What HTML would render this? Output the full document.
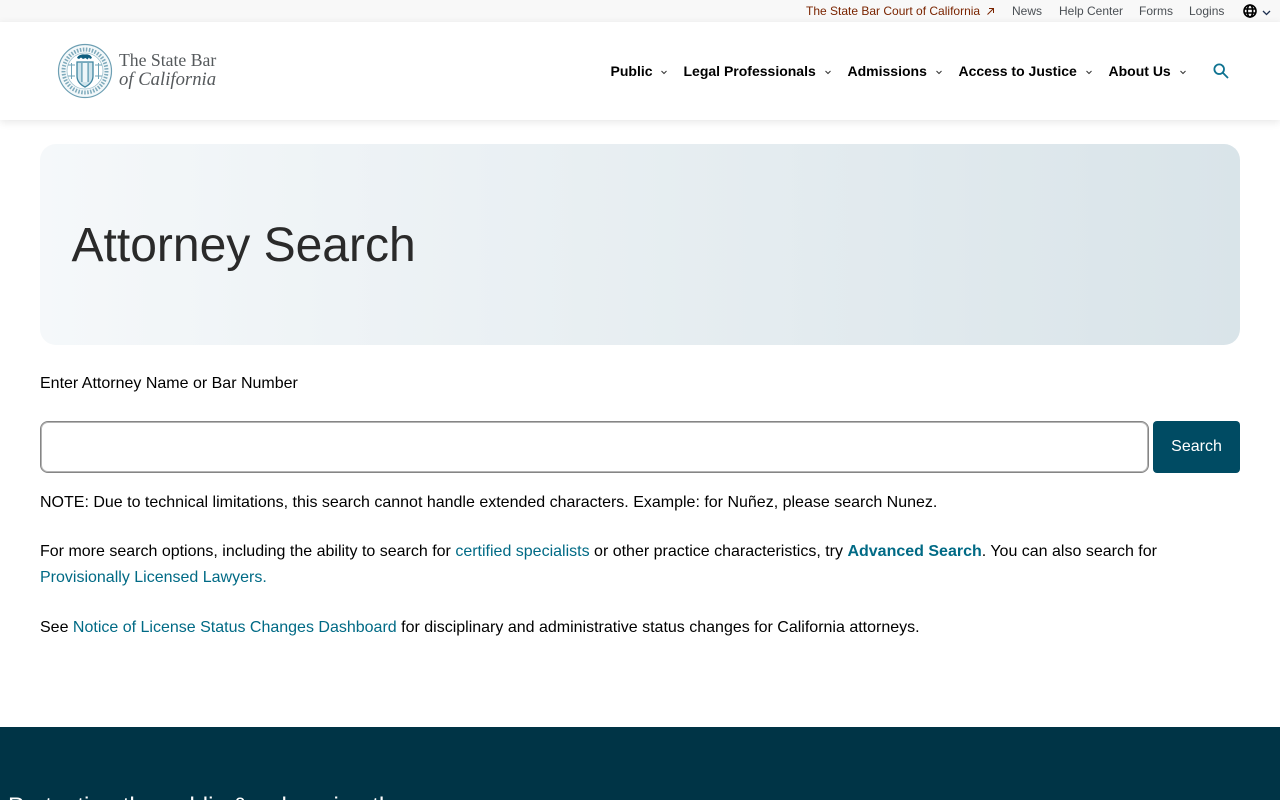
<!DOCTYPE html>
<html lang="en">
<head>
<meta charset="utf-8">
<title>Attorney Search</title>
<style>
*{box-sizing:border-box}
html,body{margin:0;padding:0;width:1280px;height:800px;overflow:hidden;background:#fff;font-family:"Liberation Sans",Arial,sans-serif;color:#000}
a{text-decoration:none}
.abs{position:absolute;white-space:nowrap}
#top{position:absolute;left:0;top:0;width:1280px;height:22px;background:#f8f8f8}
#top .abs{font-size:12px;line-height:22px;top:0;color:#4a4f54}
#hdr{position:absolute;left:0;top:22px;width:1280px;height:98px;background:#fff;box-shadow:0 2px 8px rgba(0,0,0,.1)}
.nav{position:absolute;top:62px;font-size:14px;font-weight:700;line-height:18px;color:#000;white-space:nowrap;margin-left:-.5px}
.chev{position:absolute;top:70px}
#hero{position:absolute;left:40px;top:144px;width:1200px;height:201px;border-radius:16px;background:linear-gradient(90deg,#f5f8fa 0%,#d9e4e9 100%)}
#hero h1{position:absolute;left:32px;top:72px;margin:0;font-size:48px;line-height:60px;font-weight:400;color:#2a2a2a;white-space:nowrap;margin-left:-.5px}
.t{position:absolute;left:40px;font-size:16px;line-height:26px;color:#000;white-space:nowrap}
.t a{color:#006a85}
#inp{position:absolute;left:40px;top:421px;width:1109px;height:52px;border:1px solid #858585;border-radius:8px;background:#fff;box-shadow:inset 0 0 0 1px #b5b5b5}
#btn{position:absolute;left:1153px;top:421px;width:87px;height:52px;background:#004b63;border-radius:4px;color:#fff;font-size:16px;line-height:52px;text-align:center}
#foot{position:absolute;left:0;top:727px;width:1280px;height:73px;background:#003446;overflow:hidden}
#foot div{position:absolute;left:8px;top:65px;font-size:24px;line-height:30px;color:#fff;white-space:nowrap}
</style>
</head>
<body>
<div id="top">
  <a class="abs" style="left:806px;color:#7a2400">The State Bar Court of California</a>
  <svg class="abs" style="left:986px;top:7px" width="9" height="9" viewBox="0 0 9 9" fill="none" stroke="#7a2400" stroke-width="1"><path d="M1.500 7.500L7 2M3 1.500H7.500V6"/></svg>
  <a class="abs" style="left:1012px">News</a>
  <a class="abs" style="left:1059px">Help Center</a>
  <a class="abs" style="left:1139px">Forms</a>
  <a class="abs" style="left:1189px">Logins</a>
  <svg class="abs" style="left:1243px;top:4px" width="14" height="14" viewBox="0 0 14 14" fill="none" stroke="#000" stroke-width="1.600"><circle cx="7" cy="7" r="6"/><ellipse cx="7" cy="7" rx="2.700" ry="6"/><path d="M1 5H13M1 9H13"/></svg>
  <svg class="abs" style="left:1262px;top:10px" width="9" height="6" viewBox="0 0 9 6" fill="none" stroke="#1d2f50" stroke-width="1.300"><path d="M1 1L4.500 4.500L8 1"/></svg>
</div>
<div id="hdr"></div>

<svg class="abs" style="left:57px;top:42.500px" width="56" height="56" viewBox="0 0 56 56" fill="none">
  <circle cx="28" cy="28" r="26.500" fill="#f3f8fa" stroke="#6d9fb3" stroke-width="1.200"/>
  <circle cx="28" cy="28" r="21.500" stroke="#7fabbc" stroke-width="4" stroke-dasharray="1.500 1.500"/>
  <circle cx="28" cy="28" r="18" fill="#fff" stroke="#9fc2cf" stroke-width=".8"/>
  <path d="M20 15c1-3 5-4 8-3.500 3-.5 6 .5 7 3.500l-2 1-1-1.500-1.500 2-2-1.500-2.500 1-2-1.500-2 1.500z" fill="#0f5f80"/>
  <path d="M20 19H36V33C36 39 32 42 28 44C24 42 20 39 20 33Z" fill="#cfe4ec" stroke="#3f85a0" stroke-width="1.300"/>
  <path d="M25 20V39M31 20V39" stroke="#4f90a9" stroke-width="1.300"/>
  <rect x="25.500" y="20" width="5" height="19" fill="#eef6f9"/>
  <path d="M11 22H18M38 22H45M14.500 20V36M41.500 20V36M11 33H18M38 33H45" stroke="#6fa3b7" stroke-width="1"/>
</svg>
<div class="abs" style="left:119px;top:49px;font-family:'Liberation Serif',serif;font-size:17.700px;line-height:22px;color:#55595c">The State Bar</div>
<div class="abs" style="left:119px;top:69px;font-family:'Liberation Serif',serif;font-size:18.700px;line-height:22px;font-style:italic;color:#55595c">of California</div>

<a class="nav" style="left:611px">Public</a>
<a class="nav" style="left:684px">Legal Professionals</a>
<a class="nav" style="left:848px">Admissions</a>
<a class="nav" style="left:959px">Access to Justice</a>
<a class="nav" style="left:1109px">About Us</a>
<svg class="chev" style="left:825px" width="6" height="5" viewBox="0 0 6 5" fill="none" stroke="#333" stroke-width="1"><path d="M.5 1L3 3.500L5.500 1"/></svg>
<svg class="chev" style="left:661px" width="6" height="5" viewBox="0 0 6 5" fill="none" stroke="#333" stroke-width="1"><path d="M.5 1L3 3.500L5.500 1"/></svg>
<svg class="chev" style="left:936px" width="6" height="5" viewBox="0 0 6 5" fill="none" stroke="#333" stroke-width="1"><path d="M.5 1L3 3.500L5.500 1"/></svg>
<svg class="chev" style="left:1086px" width="6" height="5" viewBox="0 0 6 5" fill="none" stroke="#333" stroke-width="1"><path d="M.5 1L3 3.500L5.500 1"/></svg>
<svg class="chev" style="left:1180px" width="6" height="5" viewBox="0 0 6 5" fill="none" stroke="#333" stroke-width="1"><path d="M.5 1L3 3.500L5.500 1"/></svg>
<svg class="abs" style="left:1213px;top:63px" width="16" height="16" viewBox="0 0 16 16" fill="none" stroke="#0f7391" stroke-width="1.800"><circle cx="6.200" cy="6.200" r="4.800"/><path d="M9.800 9.800L15 15"/></svg>

<div id="hero"><h1>Attorney Search</h1></div>

<div class="t" style="top:371px">Enter Attorney Name or Bar Number</div>
<div id="inp"></div>
<div id="btn">Search</div>
<div class="t" style="top:490px">NOTE: Due to technical limitations, this search cannot handle extended characters. Example: for Nuñez, please search Nunez.</div>
<div class="t" style="top:539px">For more search options, including the ability to search for <a>certified specialists</a> or other practice characteristics, try <a><b>Advanced Search</b></a>. You can also search for</div>
<div class="t" style="top:565px"><a>Provisionally Licensed Lawyers.</a></div>
<div class="t" style="top:615px">See <a>Notice of License Status Changes Dashboard</a> for disciplinary and administrative status changes for California attorneys.</div>

<div id="foot"><div>Protecting the public &amp; enhancing the</div></div>
</body>
</html>
